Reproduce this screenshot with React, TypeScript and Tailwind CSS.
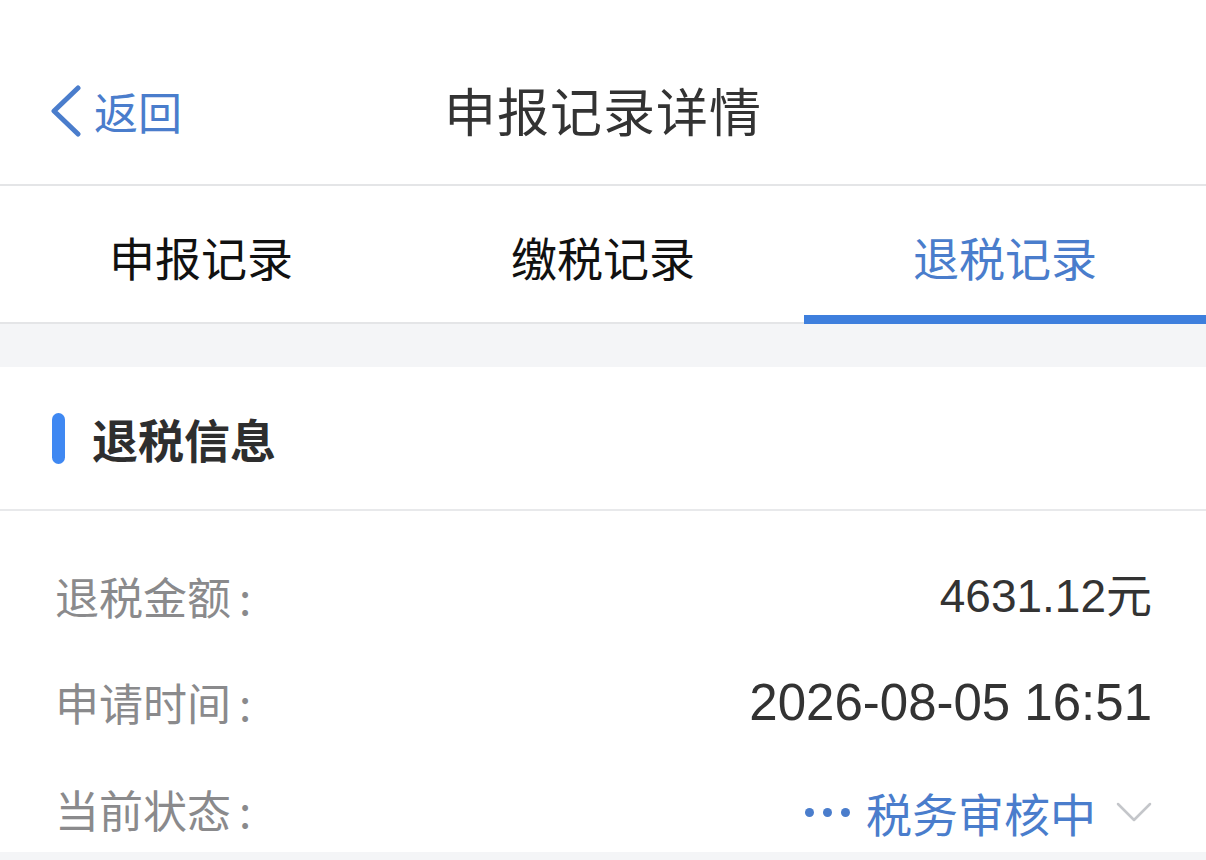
import React from 'react';

const cjk = { fontFamily: '"Noto Sans CJK SC", "Noto Sans", sans-serif' };
const num = { fontFamily: '"Liberation Sans", "Noto Sans CJK SC", sans-serif' };

const tabs = ['申报记录', '缴税记录', '退税记录'];

export default function App() {
  const active = 2;

  return (
    <div className="w-[1206px] h-[860px] bg-white overflow-hidden" style={cjk}>
      {/* Header */}
      <div className="h-[186px] pt-[36px] grid grid-cols-[1fr_auto_1fr] items-center border-b-2 border-[#e4e5e7]">
        <div className="flex items-center pl-[50px] pt-[2px]">
          <svg width="32" height="52" viewBox="0 0 32 52" className="mr-[12px]">
            <polyline points="28,3 4,26 28,49" fill="none" stroke="#4a7dcc" strokeWidth="5" strokeLinecap="round" strokeLinejoin="round" />
          </svg>
          <span className="text-[44px] leading-none text-[#4a7dcc]">返回</span>
        </div>
        <h1 className="text-[52px] leading-none text-[#333333] tracking-[1px]">申报记录详情</h1>
        <div />
      </div>

      {/* Tabs */}
      <div className="grid grid-cols-3 h-[138px] border-b-2 border-[#e4e5e7]">
        {tabs.map((t, i) => (
          <div key={t} className="relative flex items-center justify-center pt-[4px]">
            <span className={`text-[46px] leading-none ${i === active ? 'text-[#4a7dcc]' : 'text-[#111111]'}`}>{t}</span>
            {i === active && <div className="absolute left-0 right-0 bottom-[-2px] h-[9px] bg-[#3e7fdd]" />}
          </div>
        ))}
      </div>

      {/* Gray gap */}
      <div className="h-[43px] bg-[#f4f5f7]" />

      {/* Section title */}
      <div className="h-[144px] flex items-center pl-[52px] border-b-2 border-[#e8e9eb]">
        <div className="w-[13px] h-[51px] rounded-full bg-[#3f88f2] mr-[27px]" />
        <span className="text-[46px] font-bold leading-none text-[#2e2e2e]">退税信息</span>
      </div>

      {/* Rows */}
      <div className="pl-[55px] pr-[54px] pt-[32px]">
        <div className="h-[106px] flex items-center justify-between">
          <span className="text-[44px] leading-none text-[#8a8a8c]">退税金额<span className="ml-[8px]">:</span></span>
          <span className="text-[46px] leading-none text-[#333333]" style={num}>4631.12元</span>
        </div>
        <div className="h-[106px] flex items-center justify-between">
          <span className="text-[44px] leading-none text-[#8a8a8c]">申请时间<span className="ml-[8px]">:</span></span>
          <span className="text-[51px] leading-none text-[#333333]" style={num}>2026-08-05 16:51</span>
        </div>
        <div className="h-[97px] pt-[11px] flex items-center justify-between">
          <span className="text-[44px] leading-none text-[#8a8a8c]">当前状态<span className="ml-[8px]">:</span></span>
          <div className="flex items-center pt-[6px]">
            <div className="flex gap-[9px] mr-[16px]">
              <div className="w-[9px] h-[9px] rounded-full bg-[#4a7dcc]" />
              <div className="w-[9px] h-[9px] rounded-full bg-[#4a7dcc]" />
              <div className="w-[9px] h-[9px] rounded-full bg-[#4a7dcc]" />
            </div>
            <span className="text-[46px] leading-none text-[#4a7dcc]">税务审核中</span>
            <svg width="36" height="20" viewBox="0 0 36 20" className="ml-[20px]">
              <polyline points="2,2 18,18 34,2" fill="none" stroke="#c4c6ca" strokeWidth="2.5" strokeLinecap="round" strokeLinejoin="round" />
            </svg>
          </div>
        </div>
      </div>
      <div className="h-[20px] bg-[#f4f5f7]" />
    </div>
  );
}
